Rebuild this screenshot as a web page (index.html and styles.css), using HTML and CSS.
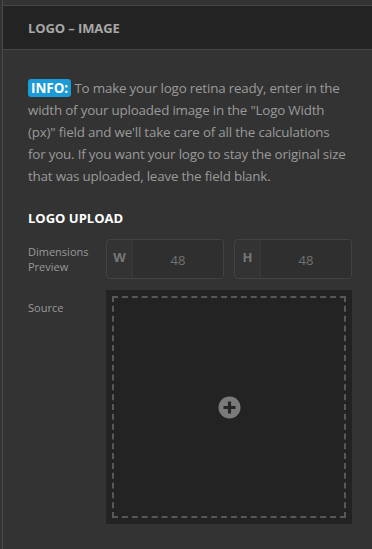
FILE: index.html
```html
<!DOCTYPE html>
<html>
<head>
<meta charset="utf-8">
<link rel="stylesheet" href="styles.css">
</head>
<body>
<div class="frame">
  <div class="topstrip"></div>
  <div class="header"><h2 class="title">LOGO – IMAGE</h2></div>
  <div class="body">
    <p class="info"><span class="badge">INFO:</span> To make your logo retina ready, enter in the<br>width of your uploaded image in the "Logo Width<br>(px)" field and we'll take care of all the calculations<br>for you. If you want your logo to stay the original size<br>that was uploaded, leave the field blank.</p>
    <h3 class="section">LOGO UPLOAD</h3>
    <div class="row">
      <div class="label">Dimensions<br>Preview</div>
      <div class="fields">
        <div class="field"><span class="key">W</span><span class="val">48</span></div>
        <div class="field"><span class="key">H</span><span class="val">48</span></div>
      </div>
    </div>
    <div class="row src">
      <div class="label">Source</div>
      <div class="upload">
        <div class="dash">
          <svg class="plus" width="23" height="23" viewBox="0 0 23 23"><circle cx="11.5" cy="11.5" r="11" fill="#7a7a7a"/><path d="M11.5 5.5v12M5.5 11.5h12" stroke="#262626" stroke-width="3.2"/></svg>
        </div>
      </div>
    </div>
  </div>
</div>
</body>
</html>
```
FILE: styles.css
```css
html, body { margin: 0; padding: 0; }
body {
  width: 372px;
  height: 549px;
  overflow: hidden;
  background: #333;
  font-family: "Open Sans", "Noto Sans", sans-serif;
}
.frame {
  height: 549px;
  margin-left: 2px;
  border-left: 1px solid #4a4a4a;
  background: #333;
}
.topstrip {
  height: 5px;
  background: #333;
  border-bottom: 1px solid #444;
}
.header {
  height: 43px;
  background: #232323;
  border-bottom: 1px solid #474747;
  display: flex;
  align-items: center;
  padding-left: 25px;
}
.title {
  margin: 0;
  font-size: 13px;
  font-weight: 700;
  color: #a8a8a8;
  letter-spacing: -0.1px;
}
.body {
  padding: 27px 4px 0 25px;
}
.info {
  margin: 0;
  font-size: 13.4px;
  line-height: 22px;
  color: #9a9a9a;
  letter-spacing: -0.2px;
  white-space: nowrap;
}
.badge {
  display: inline-block;
  background: #1a9ad6;
  color: #fff;
  font-weight: 700;
  border-radius: 3px;
  padding: 0 3px;
  line-height: 18px;
  letter-spacing: 0;
}
.section {
  margin: 22px 0 0;
  font-size: 13px;
  font-weight: 700;
  color: #fff;
  line-height: 18px;
}
.row {
  display: flex;
  margin-top: 12px;
}
.label {
  width: 78px;
  font-size: 11px;
  line-height: 15px;
  color: #999;
  padding-top: 5px;
}
.fields {
  display: flex;
  gap: 10px;
}
.field {
  width: 116px;
  height: 38px;
  border: 1px solid #434343;
  border-radius: 4px;
  display: flex;
  overflow: hidden;
}
.key {
  width: 26px;
  border-right: 1px solid #3a3a3a;
  font-size: 13px;
  font-weight: 700;
  color: #777;
  display: flex;
  justify-content: center;
  padding-top: 8px;
  box-sizing: border-box;
}
.val {
  flex: 1;
  background: #2f2f2f;
  font-size: 13px;
  color: #727272;
  display: flex;
  justify-content: center;
  align-items: center;
  padding-top: 2px;
}
.src { margin-top: 11px; }
.src .label { padding-top: 10px; }
.upload {
  width: 246px;
  height: 234px;
  background: #232323;
  padding: 6px;
  box-sizing: border-box;
}
.dash {
  height: 100%;
  border: 2px dashed #585858;
  box-sizing: border-box;
  display: flex;
  align-items: center;
  justify-content: center;
}
.plus { display: block; }
```
